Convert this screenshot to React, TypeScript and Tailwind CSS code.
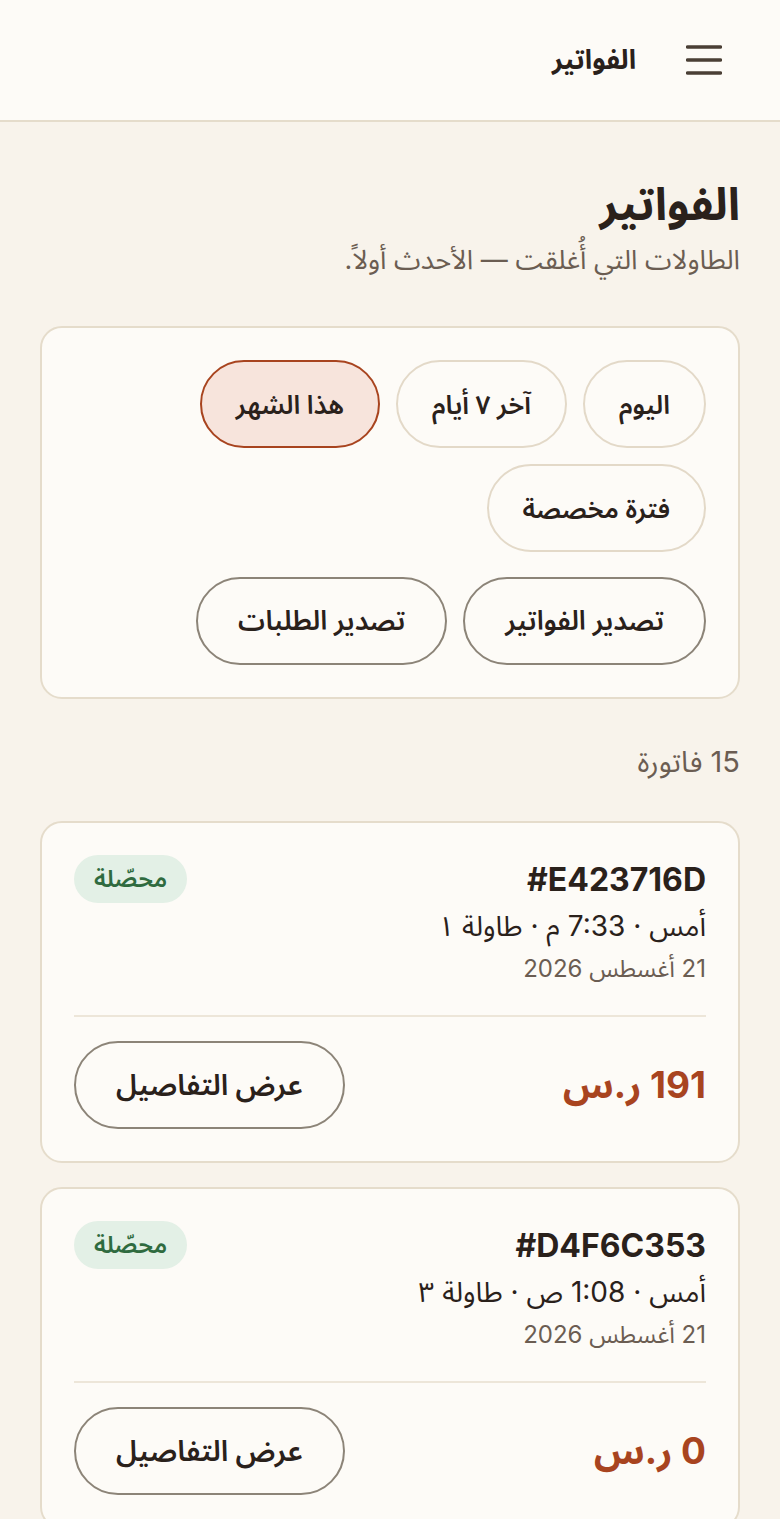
import React from "react";

const font = { fontFamily: 'Inter, "Noto Sans Arabic", "Noto Sans", sans-serif' };

function Chip({ label, active }: { label: string; active?: boolean }) {
  return (
    <button
      className={
        active
          ? "h-[88px] px-[34px] rounded-full border-2 border-[#a8441f] bg-[#f7e4dc] text-[26px] font-semibold text-[#2a211b]"
          : "h-[88px] px-[34px] rounded-full border-2 border-[#e3d9c8] bg-[#fdfbf7] text-[26px] font-semibold text-[#2a211b]"
      }
    >
      {label}
    </button>
  );
}

function OutlineButton({ label, big }: { label: string; big?: boolean }) {
  return (
    <button
      className={
        big
          ? "h-[88px] px-[40px] rounded-full border-2 border-[#8c8478] bg-[#fdfbf7] text-[29px] font-semibold text-[#2a211b]"
          : "h-[88px] px-[40px] rounded-full border-2 border-[#8c8478] bg-[#fdfbf7] text-[27px] font-semibold text-[#2a211b]"
      }
    >
      {label}
    </button>
  );
}

function InvoiceCard({ id, meta, date, amount }: { id: string; meta: string; date: string; amount: string }) {
  return (
    <div className="rounded-[22px] border-2 border-[#e5dccb] bg-[#fdfbf7] p-[32px]">
      <div className="flex items-start justify-between">
        <div className="flex flex-col">
          <div className="text-[32px] font-bold leading-[40px] text-[#2a211b] mt-[5px]" dir="ltr" style={{ textAlign: "right" }}>
            {id}
          </div>
          <div className="text-[28px] leading-[36px] text-[#2a211b] mt-[8px]">{meta}</div>
          <div className="text-[24px] leading-[30px] text-[#6b5d52] mt-[10px]">{date}</div>
        </div>
        <span className="h-[48px] px-[20px] rounded-full bg-[#e3f0e6] text-[24px] font-semibold text-[#2f6b3f] flex items-center">
          محصّلة
        </span>
      </div>
      <div className="h-[2px] bg-[#ede6d9] mt-[31px] mb-[24px]" />
      <div className="flex items-center justify-between">
        <div className="text-[37px] font-bold text-[#a8441f]">{amount}</div>
        <OutlineButton label="عرض التفاصيل" big />
      </div>
    </div>
  );
}

export default function App() {
  return (
    <div dir="rtl" style={font} className="min-h-[1519px] bg-[#f8f3eb] text-[#2a211b]">
      <header className="h-[122px] bg-[#fdfbf7] border-b-2 border-[#e5dccb] flex items-center px-[58px] gap-[50px]">
        <svg width="36" height="30" viewBox="0 0 36 30" className="shrink-0">
          <line x1="1.5" y1="2" x2="34.5" y2="2" stroke="#4a3f35" strokeWidth="3.5" strokeLinecap="round" />
          <line x1="1.5" y1="15" x2="34.5" y2="15" stroke="#4a3f35" strokeWidth="3.5" strokeLinecap="round" />
          <line x1="1.5" y1="28" x2="34.5" y2="28" stroke="#4a3f35" strokeWidth="3.5" strokeLinecap="round" />
        </svg>
        <div className="text-[27px] font-bold">الفواتير</div>
      </header>

      <main className="px-[40px]">
        <h1 className="mt-[50px] text-[45px] font-bold leading-[64px]">الفواتير</h1>
        <p className="mt-[4px] text-[27px] leading-[40px] text-[#6b5d52]">الطاولات التي أُغلقت — الأحدث أولاً.</p>

        <section className="mt-[46px] rounded-[22px] border-2 border-[#e5dccb] bg-[#fdfbf7] p-[32px]">
          <div className="flex flex-wrap gap-[16px]">
            <Chip label="اليوم" />
            <Chip label="آخر ٧ أيام" />
            <Chip label="هذا الشهر" active />
            <Chip label="فترة مخصصة" />
          </div>
          <div className="flex flex-wrap gap-[16px] mt-[25px]">
            <OutlineButton label="تصدير الفواتير" />
            <OutlineButton label="تصدير الطلبات" />
          </div>
        </section>

        <div className="mt-[43px] text-[29px] leading-[40px] text-[#6b5d52]">15 فاتورة</div>

        <div className="mt-[39px] flex flex-col gap-[24px]">
          <InvoiceCard id="#E423716D" meta="أمس · 7:33 م · طاولة ١" date="21 أغسطس 2026" amount="191 ر.س" />
          <InvoiceCard id="#D4F6C353" meta="أمس · 1:08 ص · طاولة ٣" date="21 أغسطس 2026" amount="0 ر.س" />
        </div>
      </main>
    </div>
  );
}
